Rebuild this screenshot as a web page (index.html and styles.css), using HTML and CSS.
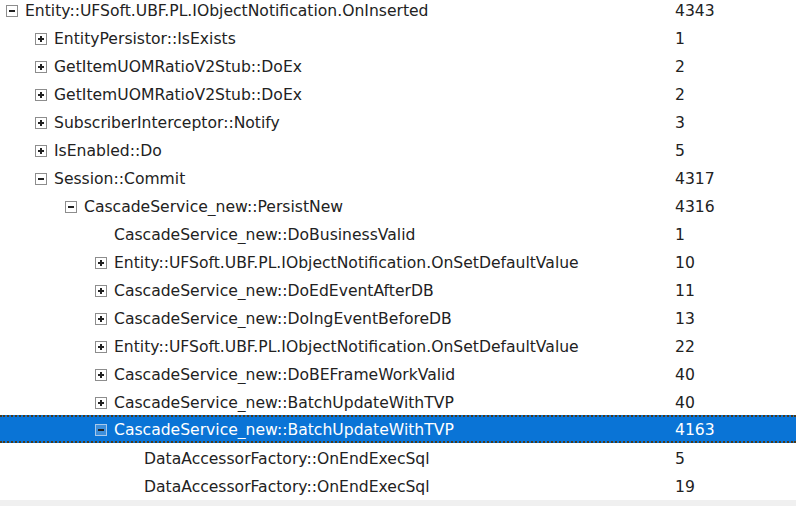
FILE: index.html
```html
<!DOCTYPE html>
<html lang="en">
<head>
  <meta charset="UTF-8">
  <title>Call Tree</title>
  <link rel="stylesheet" href="styles.css">
</head>
<body>
  <div class="tree">
    <div class="row lvl-0"><span class="name"><span class="toggle minus"></span>Entity::UFSoft.UBF.PL.IObjectNotification.OnInserted</span><span class="count">4343</span></div>
    <div class="row lvl-1"><span class="name"><span class="toggle plus"></span>EntityPersistor::IsExists</span><span class="count">1</span></div>
    <div class="row lvl-1"><span class="name"><span class="toggle plus"></span>GetItemUOMRatioV2Stub::DoEx</span><span class="count">2</span></div>
    <div class="row lvl-1"><span class="name"><span class="toggle plus"></span>GetItemUOMRatioV2Stub::DoEx</span><span class="count">2</span></div>
    <div class="row lvl-1"><span class="name"><span class="toggle plus"></span>SubscriberInterceptor::Notify</span><span class="count">3</span></div>
    <div class="row lvl-1"><span class="name"><span class="toggle plus"></span>IsEnabled::Do</span><span class="count">5</span></div>
    <div class="row lvl-1"><span class="name"><span class="toggle minus"></span>Session::Commit</span><span class="count">4317</span></div>
    <div class="row lvl-2"><span class="name"><span class="toggle minus"></span>CascadeService_new::PersistNew</span><span class="count">4316</span></div>
    <div class="row lvl-3"><span class="name"><span class="toggle none"></span>CascadeService_new::DoBusinessValid</span><span class="count">1</span></div>
    <div class="row lvl-3"><span class="name"><span class="toggle plus"></span>Entity::UFSoft.UBF.PL.IObjectNotification.OnSetDefaultValue</span><span class="count">10</span></div>
    <div class="row lvl-3"><span class="name"><span class="toggle plus"></span>CascadeService_new::DoEdEventAfterDB</span><span class="count">11</span></div>
    <div class="row lvl-3"><span class="name"><span class="toggle plus"></span>CascadeService_new::DoIngEventBeforeDB</span><span class="count">13</span></div>
    <div class="row lvl-3"><span class="name"><span class="toggle plus"></span>Entity::UFSoft.UBF.PL.IObjectNotification.OnSetDefaultValue</span><span class="count">22</span></div>
    <div class="row lvl-3"><span class="name"><span class="toggle plus"></span>CascadeService_new::DoBEFrameWorkValid</span><span class="count">40</span></div>
    <div class="row lvl-3"><span class="name"><span class="toggle plus"></span>CascadeService_new::BatchUpdateWithTVP</span><span class="count">40</span></div>
    <div class="row lvl-3 selected"><span class="name"><span class="toggle minus"></span>CascadeService_new::BatchUpdateWithTVP</span><span class="count">4163</span></div>
    <div class="row lvl-4"><span class="name"><span class="toggle none"></span>DataAccessorFactory::OnEndExecSql</span><span class="count">5</span></div>
    <div class="row lvl-4"><span class="name"><span class="toggle none"></span>DataAccessorFactory::OnEndExecSql</span><span class="count">19</span></div>
  </div>
  <div class="footer"></div>
</body>
</html>
```

FILE: styles.css
```css
* {
  margin: 0;
  padding: 0;
  box-sizing: border-box;
}

body {
  width: 796px;
  height: 506px;
  overflow: hidden;
  background: #fff;
  font-family: 'DejaVu Sans', sans-serif;
  font-size: 15.6px;
  color: #222;
  display: flex;
  flex-direction: column;
}

.tree {
  margin-top: -5px;
  height: 505px;
}

.row {
  display: grid;
  grid-template-columns: 675px 1fr;
  align-items: center;
  height: 28px;
  padding-top: 3px;
  white-space: nowrap;
}

.name {
  display: flex;
  align-items: center;
  overflow: hidden;
}

.lvl-0 .name { padding-left: 6px; }
.lvl-1 .name { padding-left: 35px; }
.lvl-2 .name { padding-left: 65px; }
.lvl-3 .name { padding-left: 95px; }
.lvl-4 .name { padding-left: 125px; }

.toggle {
  position: relative;
  width: 12px;
  height: 12px;
  margin-right: 7px;
  flex: none;
  border: 1px solid #8d8d8d;
  background: #fff;
}

.toggle.none {
  border: none;
  background: none;
}

.toggle::before,
.toggle::after {
  content: '';
  position: absolute;
  background: #222;
}

.toggle.plus::before,
.toggle.minus::before {
  left: 2px;
  top: 4px;
  width: 6px;
  height: 2px;
}

.toggle.plus::after {
  left: 4px;
  top: 2px;
  width: 2px;
  height: 6px;
}

.toggle.none::before,
.toggle.none::after,
.toggle.minus::after {
  display: none;
}

.row.selected {
  background: #0a74d6;
  color: #fff;
  padding-top: 1px;
  border-top: 2px dotted #4a3a1e;
  border-bottom: 2px dotted #4a3a1e;
}

.row.selected .toggle {
  background: #3d8fdc;
  border-color: #a9c9ea;
}

.footer {
  flex: 1;
  background: #f0f0f0;
}
```
